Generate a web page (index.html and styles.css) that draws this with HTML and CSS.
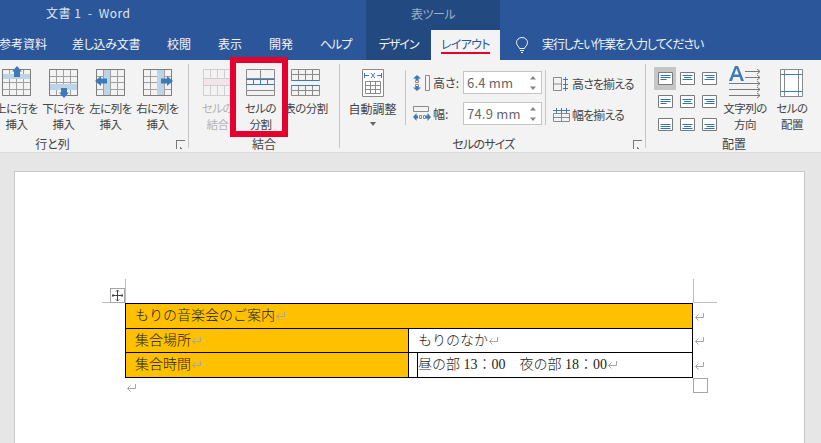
FILE: index.html
```html
<!DOCTYPE html>
<html lang="ja">
<head>
<meta charset="utf-8">
<title>文書 1 - Word</title>
<link rel="stylesheet" href="styles.css">
</head>
<body>
<svg class="defs" width="0" height="0" aria-hidden="true">
  <defs>
    <symbol id="grid" viewBox="0 0 30 27">
      <path d="M.5.5h28v26H.5zM7.500.5v26M14.500.5v26M21.500.5v26M.5 7.500h28M.5 13.500h28M.5 20.500h28" fill="none" stroke="#a0a0a0"/>
      <path d="M.5.5h28v26H.5z" fill="none" stroke="#7d7d7d"/>
    </symbol>
    <symbol id="ret" viewBox="0 0 11 10">
      <path d="M9.500 1v4.500H1.500M4.500 2.500 1.500 5.500l3 3" fill="none" stroke="#a6a6a6"/>
    </symbol>
    <symbol id="a-tl" viewBox="0 0 15 13"><path d="M.5.5h14v12H.5z" fill="#fff" stroke="#7a7a7a"/><path d="M2.500 3.500h10M2.500 5.500h10M2.500 7.500h6" stroke="#2f75b5" fill="none"/></symbol>
    <symbol id="a-t" viewBox="0 0 15 13"><path d="M.5.5h14v12H.5z" fill="#fff" stroke="#7a7a7a"/><path d="M2.500 3.500h10M4 5.500h7M2.500 7.500h10" stroke="#2f75b5" fill="none"/></symbol>
    <symbol id="a-tr" viewBox="0 0 15 13"><path d="M.5.5h14v12H.5z" fill="#fff" stroke="#7a7a7a"/><path d="M2.500 3.500h10M4.500 5.500h8M2.500 7.500h10" stroke="#2f75b5" fill="none"/></symbol>
    <symbol id="a-ml" viewBox="0 0 15 13"><path d="M.5.5h14v12H.5z" fill="#fff" stroke="#7a7a7a"/><path d="M2.500 4.500h10M2.500 6.500h10M2.500 8.500h6" stroke="#2f75b5" fill="none"/></symbol>
    <symbol id="a-m" viewBox="0 0 15 13"><path d="M.5.5h14v12H.5z" fill="#fff" stroke="#7a7a7a"/><path d="M2.500 4.500h10M4 6.500h7M2.500 8.500h10" stroke="#2f75b5" fill="none"/></symbol>
    <symbol id="a-mr" viewBox="0 0 15 13"><path d="M.5.5h14v12H.5z" fill="#fff" stroke="#7a7a7a"/><path d="M2.500 4.500h10M4.500 6.500h8M2.500 8.500h10" stroke="#2f75b5" fill="none"/></symbol>
    <symbol id="a-bl" viewBox="0 0 15 13"><path d="M.5.5h14v12H.5z" fill="#fff" stroke="#7a7a7a"/><path d="M2.500 6.500h10M2.500 8.500h10M2.500 10.500h10" stroke="#2f75b5" fill="none"/></symbol>
    <symbol id="a-b" viewBox="0 0 15 13"><path d="M.5.5h14v12H.5z" fill="#fff" stroke="#7a7a7a"/><path d="M2.500 6.500h10M4 8.500h7M2.500 10.500h10" stroke="#2f75b5" fill="none"/></symbol>
    <symbol id="a-br" viewBox="0 0 15 13"><path d="M.5.5h14v12H.5z" fill="#fff" stroke="#7a7a7a"/><path d="M2.500 6.500h10M4.500 8.500h8M2.500 10.500h10" stroke="#2f75b5" fill="none"/></symbol>
    <symbol id="tri" viewBox="0 0 6 14"><path d="M3 0l3 3.500H0zM0 10.500h6L3 14z" fill="#858585"/></symbol>
  </defs>
</svg>

<header class="titlebar">
  <div class="doc-title">文書 1&nbsp;&nbsp;-&nbsp;&nbsp;Word</div>
  <div class="tool-title">表ツール</div>
</header>

<nav class="tabs">
  <span class="tab t-ref">参考資料</span>
  <span class="tab t-mail">差し込み文書</span>
  <span class="tab t-rev">校閲</span>
  <span class="tab t-view">表示</span>
  <span class="tab t-dev">開発</span>
  <span class="tab t-help">ヘルプ</span>
  <span class="tab tool t-design">デザイン</span>
  <span class="tab tool active"><span class="active-label">レイアウト</span></span>
  <svg class="bulb" width="14" height="17" viewBox="0 0 14 17"><path d="M4.500 11.500C4 9.500 1.500 8.500 1.500 5.500a5.500 5 0 0 1 11 0c0 3-2.500 4-3 6zM5 13.500h4M6 15.500h2" fill="none" stroke="#f2f5fa"/></svg>
  <span class="tab t-tell">実行したい作業を入力してください</span>
</nav>

<section class="ribbon">
  <div class="group g-rows">
    <div class="group-body">
      <div class="btn"><svg class="ico" width="30" height="27" viewBox="0 0 30 27"><use href="#grid" width="30" height="27"/><rect x="1" y="5" width="27" height="5" fill="#bdd3e6"/><path d="M15 -3l5 5.500H18V8h-6V2.500H10z" fill="#3f7ab8"/></svg><span>上に行を<br>挿入</span></div>
      <div class="btn"><svg class="ico" width="30" height="27" viewBox="0 0 30 27"><use href="#grid" width="30" height="27"/><rect x="1" y="15" width="27" height="6" fill="#bdd3e6"/><path d="M15 29l-5-5.500H12V19h6v4.500h2z" fill="#3f7ab8"/></svg><span>下に行を<br>挿入</span></div>
      <div class="btn"><svg class="ico" width="30" height="27" viewBox="0 0 30 27"><use href="#grid" width="30" height="27"/><rect x="8" y="1" width="6" height="25" fill="#bdd3e6"/><path d="M-1 12l6-5V9.500h6v5H5V17z" fill="#3f7ab8"/></svg><span>左に列を<br>挿入</span></div>
      <div class="btn"><svg class="ico" width="30" height="27" viewBox="0 0 30 27"><use href="#grid" width="30" height="27"/><rect x="14" y="1" width="7" height="25" fill="#bdd3e6"/><path d="M30 12l-6-5V9.500h-6v5h6V17z" fill="#3f7ab8"/></svg><span>右に列を<br>挿入</span></div>
    </div>
    <div class="group-label">行と列</div>
    <i class="launcher"></i>
  </div>

  <div class="group g-merge">
    <div class="group-body">
      <div class="btn narrow disabled"><svg class="ico" width="30" height="27" viewBox="0 0 30 27"><path d="M.5.500h28v26H.5zM7.500.5v9M14.500.5v9M21.500.5v9M7.500 17v9M14.500 17v9M21.500 17v9M.5 9.500h28M.5 16.500h28" fill="none" stroke="#cfcfcf"/><rect x="1" y="10" width="27" height="6" fill="#f0e6ea"/></svg><span>セルの<br>結合</span></div>
      <div class="btn narrow"><svg class="ico" width="30" height="27" viewBox="0 0 30 27"><path d="M.5.500h28v26H.5zM14.500.5v9M.5 9.500h28" fill="none" stroke="#8a8a8a"/><path d="M.5 10.500h28M.5 15.500h28M7.500 10v6M14.500 10v6M21.500 10v6" fill="none" stroke="#3f7ab8"/><path d="M.5 21.500h28" stroke="#8a8a8a"/></svg><span>セルの<br>分割</span></div>
      <div class="btn wide"><svg class="ico" width="30" height="27" viewBox="0 0 30 27"><path d="M.5.500h28v11H.5zM7.500.5v11M14.500.5v11M21.500.5v11M.5 5.500h28M.5 16.500h28v10H.5zM7.500 16.500v10M14.500 16.500v10M21.500 16.500v10M.5 21.500h28" fill="none" stroke="#8a8a8a"/><path d="M.5 11.500h28M.5 16.500h28" stroke="#3f7ab8"/></svg><span>表の分割</span></div>
    </div>
    <div class="group-label">結合</div>
  </div>

  <div class="group g-size">
    <div class="group-body">
      <div class="btn auto">
        <svg class="ico" width="22" height="28" viewBox="0 0 22 28"><path d="M.5.500h21v27H.5z" fill="#fff" stroke="#8a8a8a"/><path d="M3 6.500h4M15 6.500h4M2.500 4v5M19.500 4v5M9 4l4 5M13 4l-4 5" stroke="#3f7ab8" fill="none"/><path d="M3.500 12.500h15v12h-15zM3.500 16.500h15M3.500 20.500h15M8.500 12.500v12M13.500 12.500v12" fill="none" stroke="#8a8a8a"/></svg>
        <span class="auto-label">自動調整</span>
        <i class="caret"></i>
      </div>
      <div class="vsep"></div>
      <div class="dims">
        <div class="dim">
          <svg width="18" height="16" viewBox="0 0 18 16"><path d="M12.500.5h4v15h-4z" fill="none" stroke="#8a8a8a"/><path d="M2.500 5.500h3v2h-3zM2.500 9.500h3v2h-3z" fill="none" stroke="#8a8a8a"/><path d="M0 3.500 4 0l4 3.500H5.500V5h-3V3.500zM0 12.500 4 16l4-3.500H5.500V11h-3v1.500z" fill="#3f7ab8"/></svg>
          <label>高さ:</label>
          <div class="spin"><span>6.4 mm</span><svg class="steps"><use href="#tri"/></svg></div>
        </div>
        <div class="dim">
          <svg width="18" height="16" viewBox="0 0 18 16"><path d="M.5.500h15v5H.5z" fill="none" stroke="#8a8a8a"/><path d="M6.500 9.500h2v3h-2zM10.500 9.500h2v3h-2z" fill="none" stroke="#8a8a8a"/><path d="M0 11l3.500-4v2.500H5v3H3.500V15zM18 11l-3.500-4v2.500H13v3h1.500V15z" fill="#3f7ab8"/></svg>
          <label>幅:</label>
          <div class="spin"><span>74.9 mm</span><svg class="steps"><use href="#tri"/></svg></div>
        </div>
      </div>
      <div class="vsep"></div>
      <div class="dist">
        <div class="dist-row"><svg width="17" height="14" viewBox="0 0 17 14"><path d="M.5.500h8v13h-8zM.5 7h8" fill="none" stroke="#8a8a8a"/><path d="M12.500 0v14M10 2.500h5M10 7.500h5M10 11.500h5" fill="none" stroke="#3f7ab8"/></svg><span>高さを揃える</span></div>
        <div class="dist-row"><svg width="17" height="14" viewBox="0 0 17 14"><path d="M.5 5.500h16v8H.5zM8.500 5.500v8M.5 9.500h16" fill="none" stroke="#8a8a8a"/><path d="M0 2.500h17M3.500 0v5M8.500 0v5M13.500 0v5" fill="none" stroke="#3f7ab8"/></svg><span>幅を揃える</span></div>
      </div>
    </div>
    <div class="group-label">セルのサイズ</div>
    <i class="launcher"></i>
  </div>

  <div class="group g-align">
    <div class="group-body">
      <div class="align-grid">
        <div class="acell on"><svg width="15" height="13"><use href="#a-tl"/></svg></div>
        <div class="acell"><svg width="15" height="13"><use href="#a-t"/></svg></div>
        <div class="acell"><svg width="15" height="13"><use href="#a-tr"/></svg></div>
        <div class="acell"><svg width="15" height="13"><use href="#a-ml"/></svg></div>
        <div class="acell"><svg width="15" height="13"><use href="#a-m"/></svg></div>
        <div class="acell"><svg width="15" height="13"><use href="#a-mr"/></svg></div>
        <div class="acell"><svg width="15" height="13"><use href="#a-bl"/></svg></div>
        <div class="acell"><svg width="15" height="13"><use href="#a-b"/></svg></div>
        <div class="acell"><svg width="15" height="13"><use href="#a-br"/></svg></div>
      </div>
      <div class="btn dir"><svg class="ico tall" width="32" height="34" viewBox="0 0 32 34"><path d="M0 16 6 1h3l6 15h-3l-1.400-4H4.400L3 16zM5.200 9.500h4.600L7.500 3.500z" fill="#3f7ab8" fill-rule="evenodd"/><path d="M16 6.500h15M16 12.500h15M0 18.500h31M0 24.500h31M0 30.500h31M28 4l3 2.500-3 2.500M28 10l3 2.500-3 2.500M28 16l3 2.500-3 2.500M28 22l3 2.500-3 2.500M28 28l3 2.500-3 2.500" fill="none" stroke="#7a7a7a"/></svg><span>文字列の<br>方向</span></div>
      <div class="btn cellalign"><svg class="ico" width="24" height="28" viewBox="0 0 24 28"><path d="M.5.500h22v27H.5z" fill="#fff" stroke="#8a8a8a"/><path d="M4.500.5v27M18.500.5v27" stroke="#8a8a8a"/><path d="M.5 5.500h22M.5 22.500h22" stroke="#3f7ab8"/></svg><span>セルの<br>配置</span></div>
    </div>
    <div class="group-label">配置</div>
  </div>
</section>

<main class="workspace">
  <div class="page">
    <div class="table-wrap">
      <i class="crop c-tl-v"></i>
      <i class="crop c-tl-h"></i>
      <i class="crop c-tr-v"></i>
      <i class="crop c-tr-h"></i>
      <div class="move"><svg width="11" height="11" viewBox="0 0 11 11"><path d="M5.500 0v11M0 5.500h11M4 1.500 5.500 0 7 1.500M4 9.500 5.500 11 7 9.500M1.500 4 0 5.500 1.500 7M9.500 4 11 5.500 9.500 7" fill="none" stroke="#444"/></svg></div>
      <table class="doc-table">
        <colgroup><col class="c1"><col class="c2"><col class="c3"></colgroup>
        <tr class="r1">
          <td colspan="3" class="fill">もりの音楽会のご案内<svg class="ret"><use href="#ret"/></svg></td>
        </tr>
        <tr class="r2">
          <td class="fill">集合場所<svg class="ret"><use href="#ret"/></svg></td>
          <td colspan="2" class="plain">もりのなか<svg class="ret"><use href="#ret"/></svg></td>
        </tr>
        <tr class="r3">
          <td class="fill">集合時間<svg class="ret"><use href="#ret"/></svg></td>
          <td class="sliver"></td>
          <td class="tight">昼の部 13：00　夜の部 18：00<svg class="ret"><use href="#ret"/></svg></td>
        </tr>
      </table>
      <svg class="ret row-ret rr1"><use href="#ret"/></svg>
      <svg class="ret row-ret rr2"><use href="#ret"/></svg>
      <svg class="ret row-ret rr3"><use href="#ret"/></svg>
      <i class="resize"></i>
    </div>
    <svg class="ret end-ret"><use href="#ret"/></svg>
  </div>
</main>

<div class="callout"></div>
</body>
</html>
```
FILE: styles.css
```css
* { box-sizing: border-box; }
html, body { margin: 0; height: 443px; overflow: hidden; }
body {
  position: relative;
  background: #e6e6e6;
  font-family: "Noto Sans CJK JP", "Noto Sans", sans-serif;
  font-size: 12px;
  color: #444;
  font-feature-settings: "palt";
}
.defs { position: absolute; }

.titlebar {
  height: 30px;
  background: #2b579a;
  display: flex;
  color: #dfe6f1;
  line-height: 26px;
}
.doc-title { margin-left: 46px; width: 320px; font-size: 12px; letter-spacing: .5px; }
.tool-title {
  width: 134px;
  background: #234a80;
  text-align: center;
  color: #9fb1ca;
  line-height: 28px;
  letter-spacing: -.5px;
}

.tabs {
  height: 30px;
  background: #2b579a;
  display: flex;
  align-items: stretch;
  color: #f2f5fa;
  line-height: 28px;
}
.tab { display: block; white-space: nowrap; text-align: center; }
.t-ref { width: 45px; margin-left: -1px; }
.t-mail { width: 68px; margin-left: 28px; letter-spacing: -.3px; }
.t-rev { width: 24px; margin-left: 27px; }
.t-view { width: 24px; margin-left: 27px; }
.t-dev { width: 24px; margin-left: 27px; }
.t-help { width: 30px; margin-left: 27px; margin-right: 16px; letter-spacing: -1px; }
.tool { background: #234a80; }
.t-design { width: 65px; letter-spacing: -1px; }
.active {
  width: 69px;
  background: #f3f3f3;
  color: #2b579a;
  position: relative;
  letter-spacing: -.7px;
}
.active-label {
  display: inline-block;
  height: 24px;
  line-height: 28px;
  width: 49px;
  border-bottom: 2px solid #e6002d;
}
.bulb { margin: 7px 0 0 15px; }
.t-tell { margin-left: 13px; letter-spacing: -1.1px; }

.ribbon {
  height: 93px;
  background: #f3f3f3;
  display: flex;
  padding-top: 4px;
  border-bottom: 1px solid #dcdcdc;
}
.group {
  position: relative;
  height: 84px;
  border-right: 1px solid #c6c6c6;
  flex: none;
}
.group-body { display: flex; height: 72px; padding-top: 5px; }
.group-label { text-align: center; line-height: 16px; height: 12px; }
.g-rows { width: 196px; margin-left: -7px; }
.g-rows .group-label { padding-right: 76px; }
.g-merge { width: 151px; }
.g-merge .group-body { padding-left: 7px; }
.g-size { width: 306px; }
.g-size .group-label { padding-right: 18px; letter-spacing: -.8px; }
.g-align { flex: 1; border-right: 0; }
.g-align .group-label { width: 176px; }

.btn {
  width: 47px;
  display: flex;
  flex-direction: column;
  align-items: center;
  text-align: center;
  line-height: 16px;
  flex: none;
  white-space: nowrap;
  font-size: 11.5px;
  letter-spacing: -.5px;
}
.ico { display: block; margin-bottom: 4px; overflow: visible; height: 27px; flex: none; }
.narrow { width: 43px; }
.wide { width: 48px; }
.disabled { color: #b4b4b4; }

.launcher {
  position: absolute;
  right: 3px;
  bottom: -1px;
  width: 9px;
  height: 9px;
  border-left: 1px solid #777;
  border-top: 1px solid #777;
  background: linear-gradient(45deg, #777 0 1.5px, transparent 1.5px) no-repeat 3px 3px / 5px 5px;
}

.auto { width: 65px; }
.auto .ico { height: 28px; margin-bottom: 4px; }
.auto-label { font-size: 12px; letter-spacing: 0; }
.caret {
  display: block;
  margin-top: 5px;
  border: 3px solid transparent;
  border-top: 4px solid #666;
  border-bottom: 0;
}
.vsep { width: 1px; height: 55px; background: #c6c6c6; flex: none; margin-top: 1px; }
.dims { width: 139px; padding: 2px 0 0 7px; display: flex; flex-direction: column; gap: 8px; }
.dim { display: flex; align-items: center; height: 23px; }
.dim svg { flex: none; }
.dim label { width: 32px; padding-left: 2px; line-height: 23px; }
.spin {
  width: 79px;
  height: 23px;
  background: #fff;
  border: 1px solid #c4c4c4;
  display: flex;
  align-items: center;
  justify-content: space-between;
  padding: 0 5px 0 3px;
  font-size: 13px;
  font-feature-settings: normal;
  color: #666;
  letter-spacing: .2px;
}
.spin .steps { width: 6px; height: 14px; display: block; }
.dist { padding: 6px 0 0 7px; display: flex; flex-direction: column; gap: 14px; }
.dist-row { display: flex; align-items: center; gap: 2px; height: 17px; white-space: nowrap; letter-spacing: -.9px; }

.align-grid {
  margin-left: 8px;
  margin-top: -2px;
  display: grid;
  grid-template-columns: repeat(3, 22px);
  grid-template-rows: repeat(3, 23px);
  width: 66px;
  height: 69px;
  flex: none;
}
.acell { display: flex; align-items: center; justify-content: center; }
.acell svg { display: block; }
.on { background: #c6c6c6; }
.dir { width: 52px; margin-left: -1px; }
.dir .ico.tall { height: 34px; margin: -4px 0 1px; }
.cellalign { width: 44px; margin-left: -1px; }
.cellalign .ico { height: 28px; margin-bottom: 3px; }

.workspace { padding: 18px 16px 0 14px; }
.page {
  height: 272px;
  background: #fff;
  border: 1px solid #c8c8c8;
  border-bottom: 0;
  padding: 131px 0 0 110px;
  font-size: 14px;
  font-weight: 300;
  color: #1c1c1c;
  font-feature-settings: normal;
  font-family: "Liberation Serif", "Noto Sans CJK JP", serif;
}
.table-wrap { position: relative; width: 567px; }
.doc-table {
  width: 567px;
  border-collapse: collapse;
  table-layout: fixed;
  line-height: 20px;
}
.c1 { width: 283px; }
.c2 { width: 9px; }
.c3 { width: 275px; }
.doc-table td { border: 1px solid #000; padding: 0 0 0 9px; white-space: nowrap; }
.r1 { height: 25px; }
.r2 { height: 24px; }
.r3 { height: 25px; }
.doc-table .fill { background: #ffc000; }
.doc-table .plain { padding-left: 9px; }
.doc-table .sliver { padding: 0; }
.doc-table .tight { padding-left: 0; }
.ret { width: 11px; height: 10px; vertical-align: -1px; }

.crop { position: absolute; background: #bdbdbd; display: block; }
.c-tl-v { left: 0; top: -24px; width: 1px; height: 24px; }
.c-tl-h { left: -23px; top: -1px; width: 23px; height: 1px; }
.c-tr-v { left: 568px; top: -24px; width: 1px; height: 24px; }
.c-tr-h { left: 568px; top: -1px; width: 24px; height: 1px; }
.move {
  position: absolute;
  left: -15px;
  top: -15px;
  width: 15px;
  height: 15px;
  border: 1px solid #a6a6a6;
  background: #fff;
  display: flex;
  align-items: center;
  justify-content: center;
}
.move svg { display: block; }
.row-ret { position: absolute; left: 569px; }
.rr1 { top: 9px; }
.rr2 { top: 33px; }
.rr3 { top: 58px; }
.resize {
  position: absolute;
  left: 568px;
  top: 75px;
  width: 15px;
  height: 15px;
  border: 1px solid #a6a6a6;
  background: #fff;
}
.end-ret { display: block; margin-top: 5px; margin-left: 1px; }

.callout {
  position: absolute;
  left: 230px;
  top: 57px;
  width: 58px;
  height: 80px;
  border: 6px solid #e6002d;
}
```
